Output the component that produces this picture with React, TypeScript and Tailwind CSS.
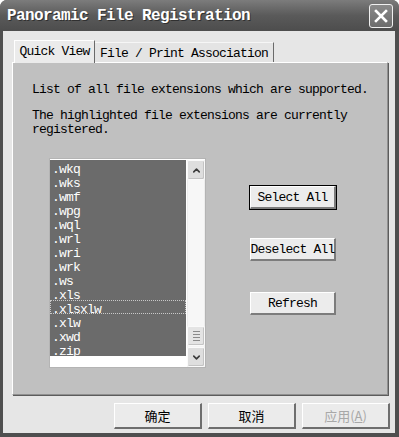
import { ChevronUp, ChevronDown } from 'lucide-react';

const extensions = ['.wkq', '.wks', '.wmf', '.wpg', '.wql', '.wrl', '.wri', '.wrk', '.ws', '.xls', '.xlsxlw', '.xlw', '.xwd', '.zip'];

const mono = "font-['Liberation_Mono',monospace] text-[13px] tracking-[-0.8px]";

function PanelButton({ label, isDefault }: { label: string; isDefault?: boolean }) {
  return (
    <div className={isDefault ? 'border border-black' : 'border border-transparent'}>
      <button
        className={`w-[86px] h-[23px] flex items-center justify-center whitespace-nowrap pt-px bg-[#ececec] border-t border-l border-t-white border-l-white border-b-2 border-r-2 border-b-[#7c7c7c] border-r-[#7c7c7c] text-black leading-[14px] ${mono}`}
      >
        {label}
      </button>
    </div>
  );
}

function DialogButton({ children, disabled }: { children: React.ReactNode; disabled?: boolean }) {
  return (
    <button
      className={`w-[88px] h-[26px] flex items-center justify-center bg-[#ebebeb] border-t border-l border-t-white border-l-white border-b-2 border-r-2 border-b-[#6e6e6e] border-r-[#6e6e6e] text-[13px] font-['Noto_Sans_CJK_SC',sans-serif] ${disabled ? 'text-[#a8a8a8]' : 'text-black'}`}
    >
      {children}
    </button>
  );
}

export default function App() {
  return (
    <div className="w-[399px] h-[437px] bg-[#4f4f4f] rounded-t-[7px] flex flex-col overflow-hidden">
      {/* Title bar */}
      <div className="h-[31px] flex items-center pl-[7px] pr-[6px] pt-[1px] bg-gradient-to-b from-[#7c7c7c] via-[#5a5a5a] to-[#4d4d4d]">
        <span className="font-['Liberation_Mono',monospace] font-bold text-[16px] tracking-[-0.6px] text-white [text-shadow:1px_1px_0_#303030]">
          Panoramic File Registration
        </span>
        <div className="ml-auto w-[24px] h-[24px] rounded-[3px] border border-[#f0f0f0] bg-gradient-to-b from-[#8a8a8a] to-[#6c6c6c] flex items-center justify-center">
          <svg width="14" height="14" viewBox="0 0 14 14">
            <path d="M2 2 L12 12 M12 2 L2 12" stroke="white" strokeWidth="2.6" strokeLinecap="square" />
          </svg>
        </div>
      </div>

      {/* Client area */}
      <div className="flex-1 ml-[3px] mr-[4px] mb-[4px] bg-[#e6e6e6] flex flex-col">
        {/* Tabs */}
        <div className="flex items-end pt-[9px] pl-[11px] h-[31px]">
          <div className={`relative z-10 w-[81px] h-[23px] -mb-px bg-[#ebebeb] border-t border-l border-t-white border-l-white border-r border-r-[#6a6a6a] flex items-start justify-center pt-[4px] leading-[14px] text-black ${mono}`}>
            Quick View
          </div>
          <div className={`w-[179px] h-[20px] bg-[#e4e4e4] border-t border-t-[#f6f6f6] border-r border-r-[#6a6a6a] flex items-start justify-center pt-[4px] leading-[14px] text-black ${mono}`}>
            File / Print Association
          </div>
        </div>

        {/* Tab panel */}
        <div className="ml-[9px] w-[376px] h-[333px] bg-[#c0c0c0] border-t border-l border-t-white border-l-white border-r border-b border-r-[#909090] border-b-[#909090] shadow-[1px_1px_0_#5c5c5c] pt-[20px] pl-[19px]">
          <p className={`leading-[14px] text-black ${mono}`}>List of all file extensions which are supported.</p>
          <p className={`mt-[12px] w-[340px] leading-[14px] text-black ${mono}`}>
            The highlighted file extensions are currently registered.
          </p>

          <div className="flex mt-[21px] ml-[17px]">
            {/* List box */}
            <div className="w-[157px] h-[210px] border border-[#b4b4b4] bg-white flex pt-px">
              <div className="flex-1">
                {extensions.map((ext) => (
                  <div
                    key={ext}
                    className={`h-[14px] bg-[#6b6b6b] pl-[2px] text-white leading-[20px] ${mono} ${ext === '.xlsxlw' ? 'outline-dotted outline-1 -outline-offset-1 outline-[#c8c8c8]' : ''}`}
                  >
                    {ext}
                  </div>
                ))}
              </div>
              <div className="w-[18px] ml-px flex flex-col bg-[#f4f4f4]">
                <div className="h-[20px] rounded-[2px] border border-[#fafafa] bg-[#dedede] shadow-[inset_-1px_-1px_0_#c4c4c4] flex items-center justify-center">
                  <ChevronUp size={11} strokeWidth={3.5} className="text-[#3c3c3c]" />
                </div>
                <div className="flex-1 bg-[#f7f7f7] border-x border-[#ededed]" />
                <div className="h-[20px] rounded-[2px] border border-[#fafafa] bg-[#e4e4e4] shadow-[inset_-1px_-1px_0_#c4c4c4] flex flex-col items-center justify-center gap-[2px]">
                  <div className="w-[7px] h-px bg-[#8a8a8a]" />
                  <div className="w-[7px] h-px bg-[#8a8a8a]" />
                  <div className="w-[7px] h-px bg-[#8a8a8a]" />
                  <div className="w-[7px] h-px bg-[#8a8a8a]" />
                </div>
                <div className="h-[20px] mt-px rounded-[2px] border border-[#fafafa] bg-[#dedede] shadow-[inset_-1px_-1px_0_#c4c4c4] flex items-center justify-center">
                  <ChevronDown size={11} strokeWidth={3.5} className="text-[#3c3c3c]" />
                </div>
              </div>
            </div>

            {/* Action buttons */}
            <div className="ml-[43px] pt-[27px] flex flex-col">
              <PanelButton label="Select All" isDefault />
              <div className="mt-[27px]">
                <PanelButton label="Deselect All" />
              </div>
              <div className="mt-[29px]">
                <PanelButton label="Refresh" />
              </div>
            </div>
          </div>
        </div>

        {/* Dialog buttons */}
        <div className="flex justify-end gap-[6px] pr-[5px] mt-[8px]">
          <DialogButton>确定</DialogButton>
          <DialogButton>取消</DialogButton>
          <DialogButton disabled>
            应用(<span className="underline">A</span>)
          </DialogButton>
        </div>
      </div>
    </div>
  );
}
